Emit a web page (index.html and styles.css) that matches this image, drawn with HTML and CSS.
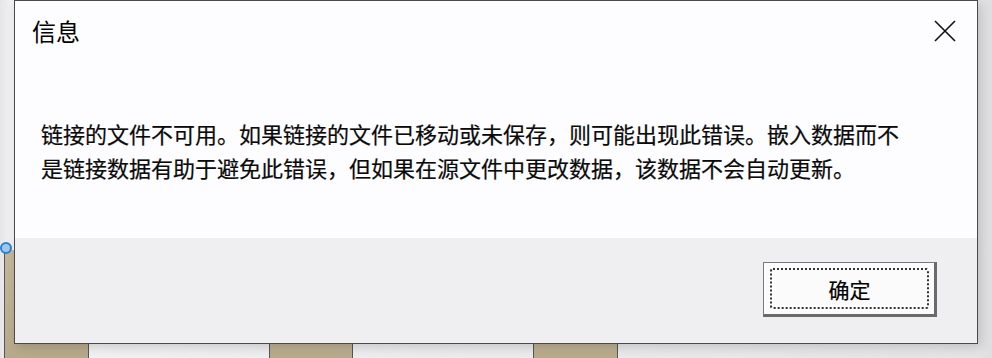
FILE: index.html
```html
<!DOCTYPE html>
<html>
<head>
  <meta charset="utf-8">
  <title>信息</title>
  <link rel="stylesheet" href="styles.css">
</head>
<body>

<div class="desk">

  <!-- sheet behind the dialog -->
  <div class="cells">
    <div class="cell cell-a"></div>
    <div class="cell cell-b"></div>
    <div class="cell cell-c"></div>
  </div>
  <div class="handle"></div>

  <!-- dialog -->
  <div class="dialog">
    <div class="main">
      <div class="titlebar">
        <span class="title">信息</span>
        <svg class="close" width="24" height="24" viewBox="0 0 24 24">
          <path d="M2 2 L22 22 M22 2 L2 22" stroke="#111" stroke-width="1.6" fill="none"/>
        </svg>
      </div>
      <p class="msg">链接的文件不可用。如果链接的文件已移动或未保存，则可能出现此错误。嵌入数据而不<br>是链接数据有助于避免此错误，但如果在源文件中更改数据，该数据不会自动更新。</p>
    </div>
    <div class="footer">
      <button class="ok"><span class="focus">确定</span></button>
    </div>
  </div>

</div>

</body>
</html>
```

FILE: styles.css
```css
body {
  margin: 0;
  font-family: "Noto Sans CJK SC", "Noto Sans", sans-serif;
}
.desk {
  position: relative;
  width: 992px;
  height: 358px;
  overflow: hidden;
  background: linear-gradient(to right, #e6e6e8 0px, #f2f2f4 12px, #e4e4e6 978px, #dedee0 992px);
}

/* background sheet */
.cells {
  display: flex;
  align-items: flex-end;
  height: 358px;
}
.cell {
  background: linear-gradient(#c4b79c, #b7a98b);
  border-left: 1px solid #555;
  border-right: 1px solid #555;
  border-top: 1px solid #666;
  box-sizing: border-box;
}
.cell-a { margin-left: 4px; width: 85px; height: 108px; border-top: none; }
.cell-b { margin-left: 180px; width: 84px; height: 30px; }
.cell-c { margin-left: 180px; width: 85px; height: 30px; }

.handle {
  position: absolute;
  left: 0;
  top: 242px;
  width: 8px;
  height: 8px;
  border: 2px solid #2e7fd0;
  border-radius: 50%;
  background: #9cc8f0;
}

/* dialog */
.dialog {
  position: absolute;
  left: 14px;
  top: 0;
  width: 964px;
  height: 344px;
  box-sizing: border-box;
  border: 1px solid #4a4a4c;
  display: flex;
  flex-direction: column;
  box-shadow: 3px 3px 10px rgba(0, 0, 0, 0.16);
}
.main {
  background: #fdfcfe;
  height: 237px;
}
.titlebar {
  display: flex;
  justify-content: space-between;
  align-items: flex-start;
  padding: 18px 20px 0 17px;
}
.title {
  font-size: 24px;
  line-height: 24px;
  color: #000;
}
.close {
  margin-top: 0;
}
.msg {
  margin: 73px 0 0 26px;
  font-size: 22px;
  line-height: 34px;
  color: #0a0a0a;
  white-space: nowrap;
  -webkit-text-stroke: 0.2px #0a0a0a;
}

.footer {
  flex: 1;
  background: #efeef0;
  display: flex;
  justify-content: flex-end;
  align-items: flex-start;
  padding: 24px 40px 0 0;
}
.ok {
  width: 174px;
  height: 55px;
  padding: 5px 5px 5px 6px;
  box-sizing: border-box;
  background: #fbfbfc;
  border-top: 1px solid #7a7a7a;
  border-left: 1px solid #7a7a7a;
  border-right: 3px solid #6a6a6a;
  border-bottom: 3px solid #6a6a6a;
  font-family: inherit;
  display: flex;
}
.focus {
  flex: 1;
  border: 2px dotted #333;
  border-radius: 3px;
  font-size: 21px;
  color: #000;
  -webkit-text-stroke: 0.2px #000;
  display: flex;
  align-items: center;
  justify-content: center;
}
```
